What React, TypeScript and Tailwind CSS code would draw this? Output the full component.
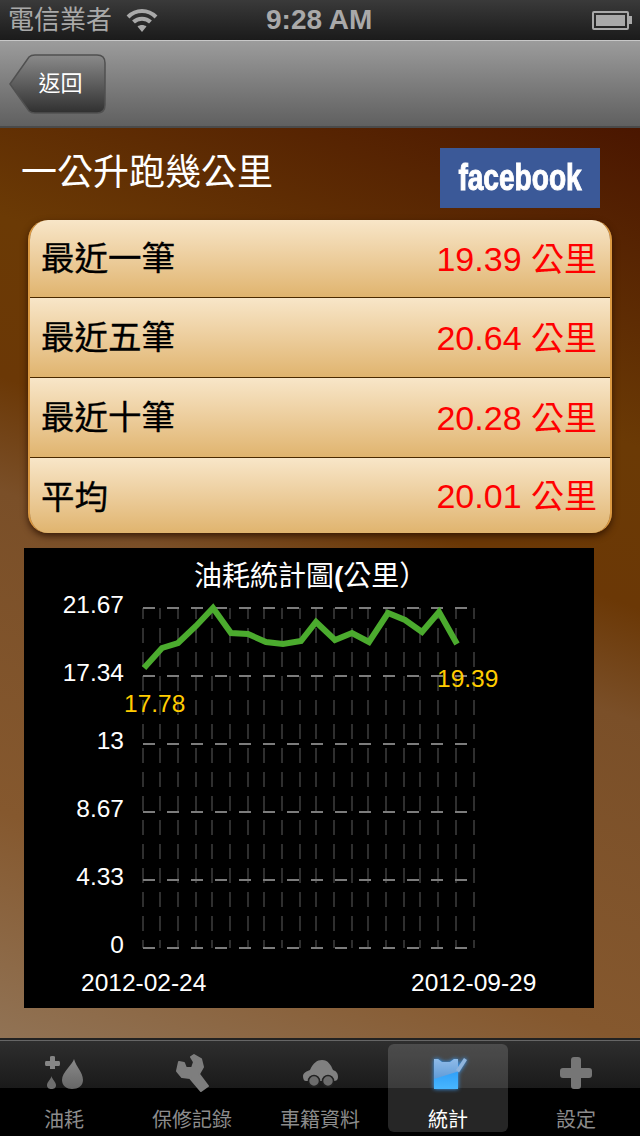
const sans = "font-['Liberation_Sans','Noto_Sans_CJK_TC',sans-serif]";

const rows = [
  { label: "最近一筆", value: "19.39", height: "h-[78px]", labelOffset: "" },
  { label: "最近五筆", value: "20.64", height: "h-[80px]", labelOffset: "mt-[1px]" },
  { label: "最近十筆", value: "20.28", height: "h-[80px]", labelOffset: "mt-[1px]" },
  { label: "平均", value: "20.01", height: "h-[75px] pt-[1px]", labelOffset: "mt-[3px]" },
];

const yTicks = [
  { label: "21.67", y: 608 },
  { label: "17.34", y: 676 },
  { label: "13", y: 744 },
  { label: "8.67", y: 812 },
  { label: "4.33", y: 880 },
  { label: "0", y: 948 },
];

const gridX = [143, 160, 178, 196, 212, 230, 248, 264, 282, 300, 316, 334, 352, 368, 386, 404, 420, 438, 456, 474];

const linePoints =
  "144,668 162,648 178,643 196,626 213,608 231,633 248,634 266,642 283,644 301,641 316,622 335,640 352,633 369,642 388,613 405,620 422,632 439,612 457,644";

function ChartGraph() {
  // svg coordinates are page coordinates, the chart box starts at 24,568
  return (
    <svg width="570" height="440" viewBox="24 568 570 440" className={sans}>
      {gridX.map((x) => (
        <line key={x} x1={x} x2={x} y1={608} y2={948} stroke="#2f2f2f" strokeWidth="2" strokeDasharray="15 9" strokeDashoffset="4" />
      ))}
      {yTicks.map((t) => (
        <line key={t.label} x1={143} x2={476} y1={t.y} y2={t.y} stroke="#7c7c7c" strokeWidth="2" strokeDasharray="12 12" />
      ))}
      <polyline points={linePoints} fill="none" stroke="#4bab2e" strokeWidth="6" strokeLinejoin="miter" />
      {yTicks.map((t) => (
        <text key={t.label} x={124} y={t.y + 5} textAnchor="end" fontSize="24.500" fill="#fff">
          {t.label}
        </text>
      ))}
      <text x={124} y={712} fontSize="24.500" fill="#ffcc00">17.78</text>
      <text x={437} y={687} fontSize="24.500" fill="#ffcc00">19.39</text>
      <text x={81} y={991} fontSize="24.500" fill="#fff">2012-02-24</text>
      <text x={411} y={991} fontSize="24.500" fill="#fff">2012-09-29</text>
    </svg>
  );
}

function TabIcon({ name }: { name: string }) {
  if (name === "fuel") {
    return (
      <svg width="38" height="34" viewBox="0 0 38 34" className="blur-[0.5px]">
        <defs>
          <linearGradient id="g1" x1="0" y1="0" x2="0" y2="1">
            <stop offset="0" stopColor="#8a8a8a" />
            <stop offset="1" stopColor="#666" />
          </linearGradient>
        </defs>
        <path d="M29 3 C28 8 17 16 17 24 C17 30 22 33 27 33 C33 33 38 30 38 24 C38 16 31 11 29 3 Z" fill="url(#g1)" />
        <path d="M5 1 Q5 0 7 0 H8 Q10 0 10 1 V5 H14 Q15 5 15 7 V8 Q15 10 14 10 H10 V13 H5 V10 H1 Q0 10 0 8 V7 Q0 5 1 5 H5 Z" fill="#858585" />
        <path d="M6.500 20 C7 23 11 26 11 29 C11 32 9 33 6.500 33 C4 33 2 32 2 29 C2 26 6 23 6.500 20 Z" fill="#6e6e6e" />
      </svg>
    );
  }
  if (name === "wrench") {
    return (
      <svg width="33" height="38" viewBox="0 0 33 38" className="blur-[0.5px]">
        <path
          d="M1 17 L3 8 L8 9 L10 14 L16 14 L18 8 L15 3 L18 1 L25 5 L27 13 L23 20 L32 32 L25 37 L14 24 L6 23 Z"
          fill="#7e7e7e"
          stroke="#7e7e7e"
          strokeWidth="2"
          strokeLinejoin="round"
        />
      </svg>
    );
  }
  if (name === "car") {
    return (
      <svg width="35" height="27" viewBox="0 0 35 27" className="blur-[0.5px]">
        <path d="M0 16 C0 13 4 11 7 10 C10 3 14 0 19 0 C25 0 28 5 30 10 C33 11 35 13 35 17 C35 20 33 21 31 21 H3 C1 21 0 19 0 16 Z" fill="#808080" />
        <circle cx="11" cy="21" r="5.500" fill="#6c6c6c" stroke="#222" strokeWidth="1.500" />
        <circle cx="25" cy="21" r="5.500" fill="#6c6c6c" stroke="#222" strokeWidth="1.500" />
      </svg>
    );
  }
  if (name === "stats") {
    return (
      <svg width="34" height="33" viewBox="0 0 34 33" className="drop-shadow-[0_0_2px_#3aa0ff] ml-[4px]">
        <defs>
          <linearGradient id="g2" x1="0" y1="0" x2="0" y2="1">
            <stop offset="0" stopColor="#8fbbe8" />
            <stop offset="1" stopColor="#5f9bd8" />
          </linearGradient>
          <linearGradient id="g3" x1="0" y1="0" x2="0" y2="1">
            <stop offset="0" stopColor="#1f90f4" />
            <stop offset="1" stopColor="#48b6ff" />
          </linearGradient>
        </defs>
        <path d="M1 2 H5 L9 5 H17 L21 2 H25 V32 H1 Z" fill="url(#g3)" />
        <path d="M1 22 L25 14.500 V2 H21 L17 5 H9 L5 2 H1 Z" fill="url(#g2)" />
        <path d="M23 13 L31 1 L34 3 L26 15.500 Z" fill="#8fb4dc" />
      </svg>
    );
  }
  return (
    <svg width="32" height="32" viewBox="0 0 32 32" className="blur-[0.5px]">
      <path d="M11 3 C11 1 12 0 14 0 H18 C20 0 21 1 21 3 V11 H29 C31 11 32 12 32 14 V18 C32 20 31 21 29 21 H21 V29 C21 31 20 32 18 32 H14 C12 32 11 31 11 29 V21 H3 C1 21 0 20 0 18 V14 C0 12 1 11 3 11 H11 Z" fill="#767676" />
    </svg>
  );
}

const tabs = [
  { icon: "fuel", label: "油耗" },
  { icon: "wrench", label: "保修記錄" },
  { icon: "car", label: "車籍資料" },
  { icon: "stats", label: "統計", active: true },
  { icon: "plus", label: "設定" },
];

export default function App() {
  return (
    <div className={`w-[640px] h-[1136px] flex flex-col overflow-hidden ${sans}`}>
      {/* Status bar */}
      <div className="h-[40px] shrink-0 flex items-center px-[8px] relative bg-gradient-to-b from-[#3a3a3a] to-[#1b1b1b] text-[#a9a9a9]">
        <span className="text-[26px] leading-none">電信業者</span>
        <svg width="32" height="24" viewBox="0 0 32 24" className="ml-[14px]" fill="none" stroke="#a9a9a9" strokeWidth="4">
          <path d="M2 9 C10 1 22 1 30 9" />
          <path d="M7.500 14 C12 9.500 20 9.500 24.500 14" />
          <path d="M16 24 L11.500 18.500 C14 16.500 18 16.500 20.500 18.500 Z" fill="#a9a9a9" stroke="none" />
        </svg>
        <span className="absolute left-[266px] top-[3px] text-[28px] leading-[34px] font-bold">9:28 AM</span>
        <div className="ml-auto flex items-center">
          <div className="w-[37px] h-[19px] border-2 border-[#a9a9a9] rounded-[2px] p-[2px]">
            <div className="w-full h-full bg-[#a9a9a9]" />
          </div>
          <div className="w-[3px] h-[8px] bg-[#a9a9a9]" />
        </div>
      </div>

      {/* Nav bar */}
      <div className="h-[88px] shrink-0 flex items-center pl-[9px] border-t border-[#c8c8c8] border-b-2 border-b-[#4a4a4a] bg-gradient-to-b from-[#9c9c9c] to-[#606060]">
        <div className="relative w-[98px] h-[60px] mt-[1px] flex items-center justify-center pl-[5px]">
          <svg width="98" height="60" viewBox="0 0 98 60" className="absolute inset-0">
            <defs>
              <linearGradient id="back" x1="0" y1="0" x2="0" y2="1">
                <stop offset="0" stopColor="#8a8a8a" />
                <stop offset="1" stopColor="#303030" />
              </linearGradient>
            </defs>
            <path d="M1 30 L20 3 Q22 1 26 1 H88 Q96 1 96 9 V51 Q96 59 88 59 H26 Q22 59 20 57 Z" fill="url(#back)" stroke="#505050" strokeWidth="1.500" />
          </svg>
          <span className="relative text-white text-[22px] leading-none">返回</span>
        </div>
      </div>

      {/* Content */}
      <div className="flex-1 min-h-0 bg-[linear-gradient(200deg,#4a1600_0%,#6b3a05_28%,#6b3806_42%,#7a4f28_52%,#85582e_80%,#917355_100%)]">
        <div className="h-[92px] flex items-start justify-between pl-[21px] pr-[40px] pt-[20px]">
          <h1 className="text-[36px] leading-[48px] text-white font-normal mt-[1px]">一公升跑幾公里</h1>
          <div className="w-[160px] h-[60px] bg-[#3b5998] flex items-center justify-center">
            <span className="text-white font-bold text-[36px] leading-none scale-x-[0.78] [-webkit-text-stroke:1px_white]">facebook</span>
          </div>
        </div>

        <div className="ml-[28px] w-[584px] rounded-[20px] overflow-hidden border-l-2 border-r-2 border-[#dc9a42] shadow-[0_3px_7px_rgba(40,15,0,0.8)]">
          {rows.map((r, i) => (
            <div
              key={r.label}
              className={`${r.height} flex items-center justify-between pl-[11px] pr-[13px] bg-gradient-to-b from-[#f8e6c8] to-[#e0b46e] ${i < 3 ? "border-b border-[#4a2a00]" : ""}`}
            >
              <span className={`text-[33.5px] leading-none text-black [-webkit-text-stroke:0.3px_black] ${r.labelOffset}`}>{r.label}</span>
              <span className="text-[34px] leading-none text-[#ff0000] whitespace-pre">
                {r.value} <span className="text-[33px]">公里</span>
              </span>
            </div>
          ))}
        </div>

        <div className="ml-[24px] mt-[15px] w-[570px] h-[460px] bg-black flex flex-col">
          <div className="h-[20px] relative">
            <span className="absolute left-[170px] top-[11px] text-[28px] leading-[36px] text-white whitespace-nowrap">
              油耗統計圖<span className="font-bold">(</span>公里）
            </span>
          </div>
          <ChartGraph />
        </div>
      </div>

      {/* Tab bar */}
      <div className="h-[96px] shrink-0 flex pt-[3px] pb-[4px] relative border-t border-[#666] shadow-[0_-2px_0_#222] bg-[linear-gradient(#2e2e2e_0%,#1a1a1a_50%,#000_50%,#000_100%)]">
        {tabs.map((t) => (
          <div
            key={t.label}
            className={`flex-1 flex flex-col items-center rounded-[6px] mx-[4px] ${t.active ? "bg-white/15" : ""}`}
          >
            <div className="h-[62px] flex items-center justify-center">
              <TabIcon name={t.icon} />
            </div>
            <span className={`mt-[6px] text-[20px] leading-[24px] ${t.active ? "text-white" : "text-[#8c8c8c]"}`}>{t.label}</span>
          </div>
        ))}
      </div>
    </div>
  );
}
